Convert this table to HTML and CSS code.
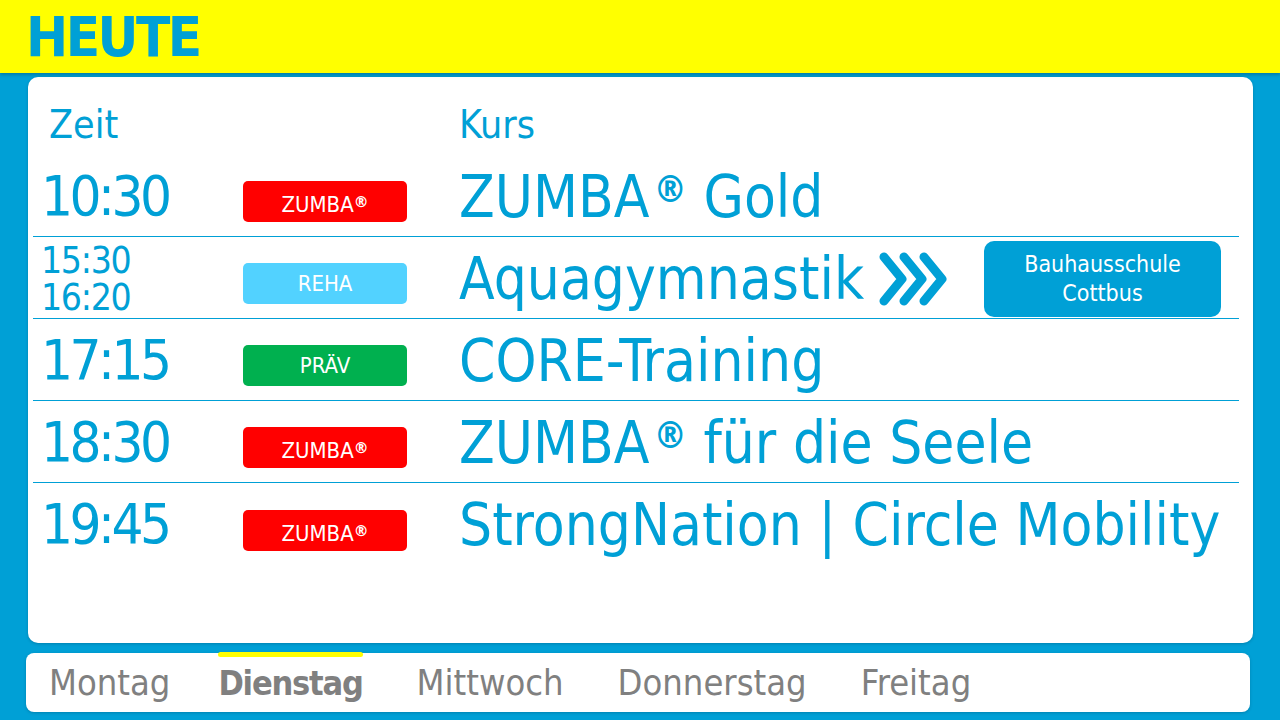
FILE: index.html
```html
<!DOCTYPE html>
<html lang="de">
<head>
<meta charset="utf-8">
<title>Heute</title>
<link rel="stylesheet" href="styles.css">
</head>
<body>
<header class="topbar"><h1 class="title">HEUTE</h1></header>
<main class="card">
  <div class="head-row">
    <div class="col-time">Zeit</div>
    <div class="col-badge"></div>
    <div class="col-course">Kurs</div>
  </div>
  <div class="row">
    <div class="col-time time">10:30</div>
    <div class="col-badge"><span class="badge red">ZUMBA<span class="reg">®</span></span></div>
    <div class="col-course course">ZUMBA<span class="reg">®</span>&nbsp;Gold</div>
  </div>
  <div class="row">
    <div class="col-time time small">15:30<br>16:20</div>
    <div class="col-badge"><span class="badge light">REHA</span></div>
    <div class="col-course course">Aquagymnastik
      <svg class="chev" viewBox="0 0 70 56" width="70" height="56" aria-hidden="true">
        <g fill="none" stroke="#00a0d6" stroke-width="9" stroke-linecap="round" stroke-linejoin="round">
          <polyline points="6,6 24,28 6,50"/>
          <polyline points="26,6 44,28 26,50"/>
          <polyline points="46,6 64,28 46,50"/>
        </g>
      </svg>
      <span class="location">Bauhausschule<br>Cottbus</span>
    </div>
  </div>
  <div class="row">
    <div class="col-time time">17:15</div>
    <div class="col-badge"><span class="badge green">PRÄV</span></div>
    <div class="col-course course">CORE-Training</div>
  </div>
  <div class="row">
    <div class="col-time time">18:30</div>
    <div class="col-badge"><span class="badge red">ZUMBA<span class="reg">®</span></span></div>
    <div class="col-course course">ZUMBA<span class="reg">®</span>&nbsp;für die Seele</div>
  </div>
  <div class="row last">
    <div class="col-time time">19:45</div>
    <div class="col-badge"><span class="badge red">ZUMBA<span class="reg">®</span></span></div>
    <div class="col-course course">StrongNation | Circle Mobility</div>
  </div>
</main>
<nav class="days">
  <span class="day">Montag</span>
  <span class="day active">Dienstag</span>
  <span class="day">Mittwoch</span>
  <span class="day">Donnerstag</span>
  <span class="day">Freitag</span>
</nav>
</body>
</html>
```
FILE: styles.css
```css
* { box-sizing: border-box; }
html, body { margin: 0; padding: 0; }
body {
  width: 1280px;
  height: 720px;
  overflow: hidden;
  background: #00a0d6;
  font-family: "DejaVu Sans Condensed", "DejaVu Sans", sans-serif;
  color: #00a0d6;
}
.topbar {
  height: 73px;
  background: #ffff00;
  padding-left: 26px;
  display: flex;
  align-items: center;
  box-shadow: 0 2px 3px rgba(0, 60, 90, 0.35);
  position: relative;
}
.title {
  margin: 0;
  font-size: 56px;
  font-weight: bold;
  color: #00a0d6;
  letter-spacing: -2.5px;
}
.card {
  margin: 4px 27px 0 28px;
  height: 566px;
  background: #fff;
  border-radius: 10px;
  padding: 0 14px 0 5px;
  box-shadow: 0 1px 3px rgba(0, 60, 90, 0.3);
}
.head-row {
  display: flex;
  height: 78px;
  align-items: flex-end;
  padding-bottom: 8px;
  font-size: 39px;
}
.head-row .col-time { padding-left: 16px; }
.row {
  display: flex;
  align-items: center;
  height: 82px;
  border-bottom: 1px solid #00a0d6;
}
.row.last { border-bottom: none; }
.col-time { width: 210px; padding-left: 8px; }
.col-badge { width: 216px; padding-top: 12px; }
.col-course { flex: 1; }
.time { font-size: 56px; line-height: 1; letter-spacing: -3.5px; }
.time.small {
  font-size: 37px;
  line-height: 37px;
  letter-spacing: -1.3px;
  padding-top: 2px;
}
.badge {
  display: block;
  width: 164px;
  height: 41px;
  border-radius: 5px;
  color: #fff;
  font-size: 22px;
  line-height: 41px;
  text-align: center;
}
.badge .reg { font-size: 0.75em; vertical-align: 0.3em; font-weight: bold; }
.red { background: #ff0000; }
.light { background: #52d2ff; }
.green { background: #00b04f; }
.course {
  font-size: 58px;
  display: flex;
  align-items: center;
  white-space: nowrap;
  padding-top: 2px;
}
.course .reg {
  font-size: 0.64em;
  font-weight: bold;
  align-self: flex-start;
  margin-top: 5px;
  margin-left: 4px;
}
.chev { margin-left: 14px; flex: none; }
.location {
  margin-left: auto;
  margin-right: 18px;
  width: 237px;
  height: 76px;
  border-radius: 10px;
  background: #00a0d6;
  color: #fff;
  font-size: 23px;
  line-height: 29px;
  display: flex;
  align-items: center;
  justify-content: center;
  text-align: center;
}
.days {
  margin: 10px 30px 0 26px;
  height: 59px;
  background: #fff;
  border-radius: 8px;
  display: flex;
  align-items: center;
  padding-left: 23px;
  gap: 54px;
  font-size: 36px;
  color: #808080;
  box-shadow: 0 1px 3px rgba(0, 60, 90, 0.3);
}
.day { position: relative; }
.day:first-child { margin-right: -6px; }
.day.active { font-weight: bold; font-size: 34px; letter-spacing: -1.2px; }
.day.active::before {
  content: "";
  position: absolute;
  left: 0; right: 0;
  top: -11px;
  height: 5px;
  border-radius: 3px;
  background: #ffff00;
}
```
